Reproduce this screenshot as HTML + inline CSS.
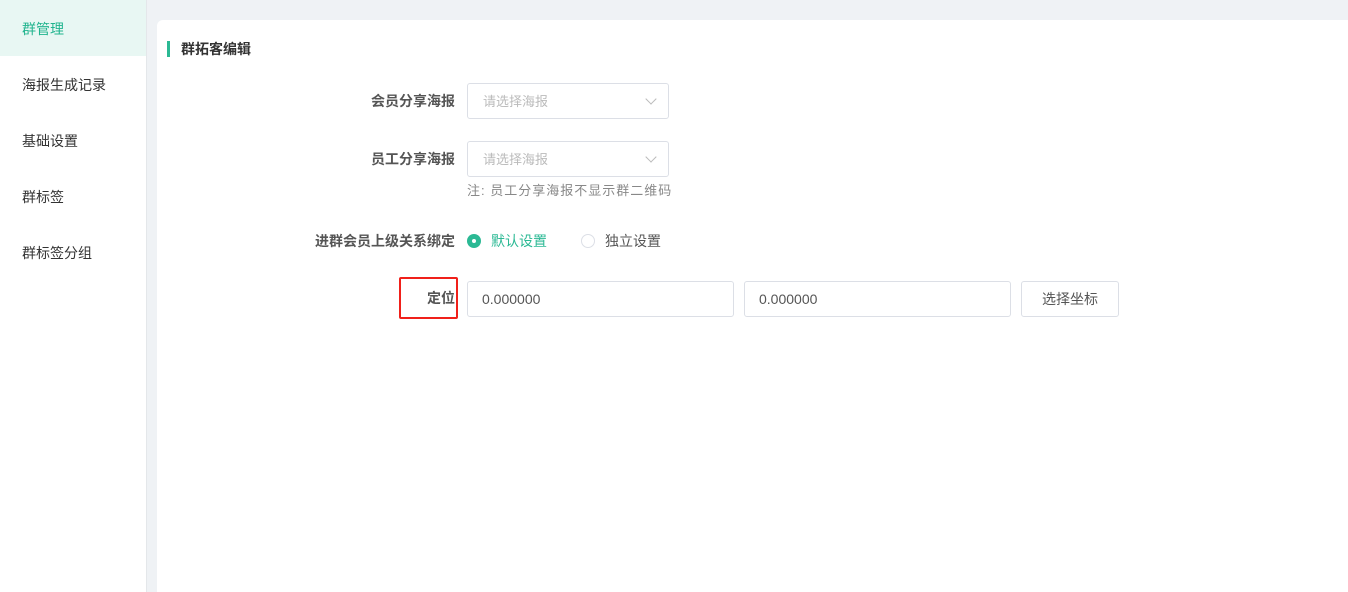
<html style="overflow:hidden"><head><style>
body{margin:0;width:1348px;height:592px;background:#eff2f5;font-family:"Liberation Sans","Noto Sans CJK SC",sans-serif;position:relative;overflow:hidden;font-size:14px;color:#333}
.side{position:absolute;left:0;top:0;width:146px;height:592px;background:#fff;border-right:1px solid #e4e7ea}
.side div{height:56px;line-height:58px;padding-left:22px;font-size:14px;color:#333}
.side .act{background:#e8f7f3;color:#21b48e}
.card{position:absolute;left:157px;top:20px;width:1200px;height:572px;background:#fff;border-radius:6px 0 0 0}
.abs{position:absolute}
.title{left:10px;top:21px;border-left:3px solid #2bb994;padding-left:11px;font-weight:bold;font-size:14px;line-height:16px;color:#333}
.lbl{font-weight:bold;font-size:14px;color:#555;text-align:right;width:298px;left:0}
.sel{border:1px solid #dcdfe6;border-radius:3px;width:202px;height:36px;box-sizing:border-box;color:#bbb;font-size:13px;line-height:36px;padding-left:15px}
.sel:after{content:"";position:absolute;right:13px;top:11px;width:7px;height:7px;border-right:1px solid #bbb;border-bottom:1px solid #bbb;transform:rotate(45deg)}
.inp{border:1px solid #dcdfe6;border-radius:3px;height:36px;box-sizing:border-box;color:#555;font-size:14px;line-height:34px;padding-left:14px}
</style></head><body>
<div class="side"><div class="act">群管理</div><div>海报生成记录</div><div>基础设置</div><div>群标签</div><div>群标签分组</div></div>
<div class="card">
<div class="abs title">群拓客编辑</div>
<div class="abs lbl" style="top:71px">会员分享海报</div>
<div class="abs sel" style="left:310px;top:63px">请选择海报</div>
<div class="abs lbl" style="top:129px">员工分享海报</div>
<div class="abs sel" style="left:310px;top:121px">请选择海报</div>
<div class="abs" style="left:310px;top:160px;font-size:13px;letter-spacing:1px;color:#888">注: 员工分享海报不显示群二维码</div>
<div class="abs lbl" style="top:211px">进群会员上级关系绑定</div>
<div class="abs" style="left:310px;top:214px;width:14px;height:14px;border-radius:50%;background:#2bb994"><div style="position:absolute;left:5px;top:5px;width:4px;height:4px;border-radius:50%;background:#fff"></div></div>
<div class="abs" style="left:334px;top:211px;font-size:14px;color:#2bb994">默认设置</div>
<div class="abs" style="left:424px;top:214px;width:12px;height:12px;border-radius:50%;border:1px solid #dcdfe6"></div>
<div class="abs" style="left:448px;top:211px;font-size:14px;color:#555">独立设置</div>
<div class="abs" style="left:242px;top:257px;width:55px;height:38px;border:2px solid #f0201a;border-radius:2px"></div>
<div class="abs lbl" style="top:268px">定位</div>
<div class="abs inp" style="left:310px;top:261px;width:267px">0.000000</div>
<div class="abs inp" style="left:587px;top:261px;width:267px">0.000000</div>
<div class="abs inp" style="left:864px;top:261px;width:98px;padding:0;text-align:center;font-size:14px">选择坐标</div>
</div>
</body></html>
